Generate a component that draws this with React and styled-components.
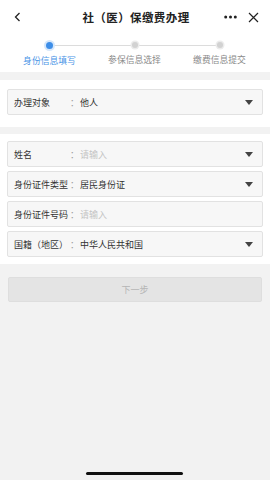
import React from "react";
import styled, { createGlobalStyle } from "styled-components";

const Global = createGlobalStyle`
  html, body { margin: 0; padding: 0; background: #f2f2f2; }
  body { font-family: "Noto Sans CJK SC", "Noto Sans", sans-serif; }
  * { box-sizing: border-box; }
`;

const Page = styled.div`
  width: 270px;
  height: 480px;
  background: #f2f2f2;
  display: flex;
  flex-direction: column;
  position: relative;
  overflow: hidden;
`;

const Header = styled.div`
  height: 34px;
  background: #fff;
  display: flex;
  align-items: center;
  padding: 0 11px 0 14px;
`;

const Back = styled.div`
  width: 16px;
  display: flex;
  align-items: center;
`;

const Title = styled.div`
  flex: 1;
  text-align: center;
  font-size: 11.5px;
  font-weight: 700;
  color: #222;
  padding-left: 18px;
  letter-spacing: 0.4px;
`;

const Actions = styled.div`
  display: flex;
  align-items: center;
  gap: 11px;
`;

const Stepper = styled.div`
  background: #fff;
  height: 38px;
  display: grid;
  grid-template-columns: repeat(3, 1fr);
  padding: 8px 8px 0 7px;
`;

const Step = styled.div`
  display: flex;
  flex-direction: column;
  align-items: center;
  position: relative;
`;

const Track = styled.div`
  position: absolute;
  top: 3px;
  left: 50%;
  width: 100%;
  height: 1px;
  background: #dcdcdc;
`;

const Dot = styled.div`
  width: ${(p) => (p.$active ? 7 : 6)}px;
  height: ${(p) => (p.$active ? 7 : 6)}px;
  border-radius: 50%;
  background: ${(p) => (p.$active ? "#3d8ee8" : "#d2d2d2")};
  box-shadow: ${(p) => (p.$active ? "0 0 0 2px #d5e7fb" : "0 0 0 1.5px #ececec")};
  position: relative;
  z-index: 1;
`;

const StepLabel = styled.div`
  margin-top: 6px;
  font-size: 8.8px;
  color: ${(p) => (p.$active ? "#4a94e6" : "#8a8a8a")};
  line-height: 11px;
  white-space: nowrap;
`;

const Gap = styled.div`
  height: ${(p) => p.$h}px;
`;

const Section = styled.div`
  background: #fff;
  padding: ${(p) => p.$pad};
  display: flex;
  flex-direction: column;
  gap: 4px;
`;

const Field = styled.div`
  height: 26px;
  margin: 0 7px;
  border: 1px solid #e2e2e2;
  border-radius: 2px;
  background: #f7f7f7;
  display: flex;
  align-items: center;
  padding: 0 9px 0 6px;
  font-size: 9px;
  color: #333;
`;

const Label = styled.span`
  width: 56px;
  flex-shrink: 0;
  white-space: nowrap;
`;

const Value = styled.span`
  flex: 1;
  color: ${(p) => (p.$placeholder ? "#c4c4c4" : "#333")};
  white-space: nowrap;
`;

const Colon = styled.span`
  color: #999;
  margin-right: 1px;
`;

const Caret = styled.div`
  width: 0;
  height: 0;
  border-left: 4px solid transparent;
  border-right: 4px solid transparent;
  border-top: 5px solid #444;
`;

const ButtonWrap = styled.div`
  padding: 13px 8px 0 8px;
`;

const NextButton = styled.div`
  height: 25px;
  background: #e4e4e4;
  border: 1px solid #dedede;
  border-radius: 2px;
  display: flex;
  align-items: center;
  justify-content: center;
  font-size: 9px;
  color: #b5b5b5;
`;

const HomeBar = styled.div`
  position: absolute;
  bottom: 5px;
  left: 86px;
  width: 97px;
  height: 3px;
  border-radius: 2px;
  background: #111;
`;

const steps = ["身份信息填写", "参保信息选择", "缴费信息提交"];

const rows = [
  { label: "姓名", value: "请输入", placeholder: true, select: true },
  { label: "身份证件类型", value: "居民身份证", select: true },
  { label: "身份证件号码", value: "请输入", placeholder: true },
  { label: "国籍（地区）", value: "中华人民共和国", select: true },
];

export default function App() {
  return (
    <Page>
      <Global />
      <Header>
        <Back>
          <svg width="8" height="10" viewBox="0 0 8 10">
            <path d="M5.5 1 L1.5 5 L5.5 9" fill="none" stroke="#222" strokeWidth="1.3" />
          </svg>
        </Back>
        <Title>社（医）保缴费办理</Title>
        <Actions>
          <svg width="13" height="4" viewBox="0 0 13 4">
            <circle cx="1.7" cy="2" r="1.5" fill="#222" />
            <circle cx="6.5" cy="2" r="1.5" fill="#222" />
            <circle cx="11.3" cy="2" r="1.5" fill="#222" />
          </svg>
          <svg width="11" height="11" viewBox="0 0 11 11">
            <path d="M1 1 L10 10 M10 1 L1 10" stroke="#222" strokeWidth="1.2" />
          </svg>
        </Actions>
      </Header>
      <Stepper>
        {steps.map((s, i) => (
          <Step key={s}>
            {i < 2 && <Track />}
            <Dot $active={i === 0} />
            <StepLabel $active={i === 0}>{s}</StepLabel>
          </Step>
        ))}
      </Stepper>
      <Gap $h={8} />
      <Section $pad="9px 0 12px 0">
        <Field>
          <Label>办理对象</Label>
          <Value><Colon>：</Colon>他人</Value>
          <Caret />
        </Field>
      </Section>
      <Gap $h={7} />
      <Section $pad="7px 0 7px 0">
        {rows.map((r) => (
          <Field key={r.label}>
            <Label>{r.label}</Label>
            <Value $placeholder={r.placeholder}><Colon>：</Colon>{r.value}</Value>
            {r.select && <Caret />}
          </Field>
        ))}
      </Section>
      <ButtonWrap>
        <NextButton>下一步</NextButton>
      </ButtonWrap>
      <HomeBar />
    </Page>
  );
}
